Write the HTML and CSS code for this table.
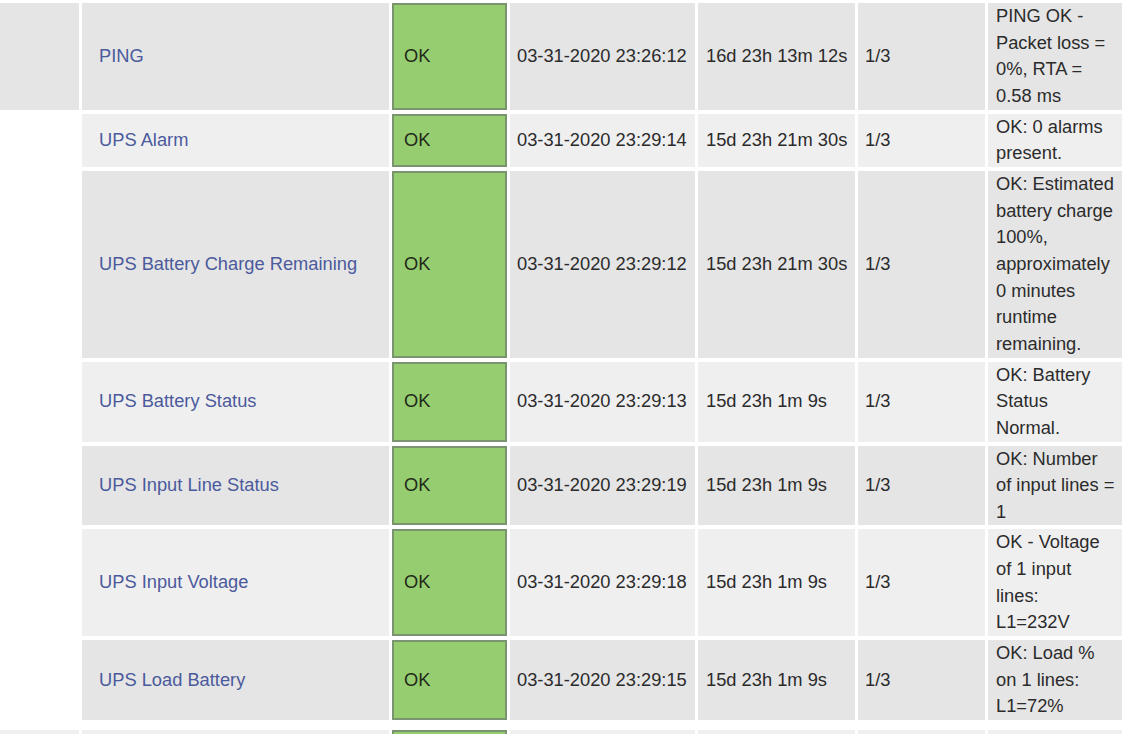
FILE: index.html
```html
<!DOCTYPE html>
<html lang="en">
<head>
    <meta charset="UTF-8">
    <meta name="viewport" content="width=device-width, initial-scale=1.0">
    <title>Service Status Details</title>
    <link rel="stylesheet" href="styles.css">
</head>
<body>
    <table class="status">
        <tr class="odd">
            <td class="host"></td>
            <td class="service"><a href="#">PING</a></td>
            <td class="state ok">OK</td>
            <td class="checked">03-31-2020 23:26:12</td>
            <td class="duration">16d 23h 13m 12s</td>
            <td class="attempt">1/3</td>
            <td class="info">PING OK - Packet loss = 0%, RTA = 0.58 ms</td>
        </tr>
        <tr class="even">
            <td class="host empty"></td>
            <td class="service"><a href="#">UPS Alarm</a></td>
            <td class="state ok">OK</td>
            <td class="checked">03-31-2020 23:29:14</td>
            <td class="duration">15d 23h 21m 30s</td>
            <td class="attempt">1/3</td>
            <td class="info">OK: 0 alarms present.</td>
        </tr>
        <tr class="odd">
            <td class="host empty"></td>
            <td class="service"><a href="#">UPS Battery Charge Remaining</a></td>
            <td class="state ok">OK</td>
            <td class="checked">03-31-2020 23:29:12</td>
            <td class="duration">15d 23h 21m 30s</td>
            <td class="attempt">1/3</td>
            <td class="info">OK: Estimated battery charge 100%, approximately 0 minutes runtime remaining.</td>
        </tr>
        <tr class="even">
            <td class="host empty"></td>
            <td class="service"><a href="#">UPS Battery Status</a></td>
            <td class="state ok">OK</td>
            <td class="checked">03-31-2020 23:29:13</td>
            <td class="duration">15d 23h 1m 9s</td>
            <td class="attempt">1/3</td>
            <td class="info">OK: Battery Status Normal.</td>
        </tr>
        <tr class="odd">
            <td class="host empty"></td>
            <td class="service"><a href="#">UPS Input Line Status</a></td>
            <td class="state ok">OK</td>
            <td class="checked">03-31-2020 23:29:19</td>
            <td class="duration">15d 23h 1m 9s</td>
            <td class="attempt">1/3</td>
            <td class="info">OK: Number of input lines = 1</td>
        </tr>
        <tr class="even">
            <td class="host empty"></td>
            <td class="service"><a href="#">UPS Input Voltage</a></td>
            <td class="state ok">OK</td>
            <td class="checked">03-31-2020 23:29:18</td>
            <td class="duration">15d 23h 1m 9s</td>
            <td class="attempt">1/3</td>
            <td class="info">OK - Voltage of 1 input lines: L1=232V</td>
        </tr>
        <tr class="odd">
            <td class="host empty"></td>
            <td class="service"><a href="#">UPS Load Battery</a></td>
            <td class="state ok">OK</td>
            <td class="checked">03-31-2020 23:29:15</td>
            <td class="duration">15d 23h 1m 9s</td>
            <td class="attempt">1/3</td>
            <td class="info">OK: Load % on 1 lines: L1=72%</td>
        </tr>
        <!-- next host starts here -->
        <tr class="gap"><td colspan="7"></td></tr>
        <tr class="even next">
            <td class="host"></td>
            <td class="service"></td>
            <td class="state ok"></td>
            <td class="checked"></td>
            <td class="duration"></td>
            <td class="attempt"></td>
            <td class="info"></td>
        </tr>
    </table>
</body>
</html>
```

FILE: styles.css
```css
* {
    box-sizing: border-box;
    margin: 0;
    padding: 0;
}

html {
    overflow: hidden;
}

body {
    background: #ffffff;
    font-family: 'Liberation Sans', Arial, sans-serif;
    font-size: 18.3px;
    color: #2b2b2b;
}

.status {
    table-layout: fixed;
    width: 1128px;
    margin: -1px 0 0 -3px;
    border-collapse: separate;
    border-spacing: 3px 4px;
}

.status td {
    line-height: 26.65px;
    vertical-align: middle;
    padding: 0 6px 0 8px;
}

/* row striping */
.odd td {
    background-color: #e5e5e5;
}

.even td {
    background-color: #f0eff0;
}

.status td.empty {
    background-color: transparent;
}

/* column widths */
.host {
    width: 79px;
}

.service {
    width: 307px;
}

.status td.service {
    padding-left: 17px;
}

.service a {
    color: #4b5a9c;
    text-decoration: none;
}

.state {
    width: 115px;
}

.status td.ok {
    background-color: #96cd70;
    border: 2px solid #7a9470;
    padding-left: 10px;
    color: #1f2a1a;
}

.checked {
    width: 185px;
}

.status td.checked {
    padding-left: 7px;
}

.duration {
    width: 157px;
}

.attempt {
    width: 127px;
}

.status td.attempt {
    padding-left: 7px;
}

.info {
    width: 134px;
}

.status td.info {
    padding-right: 6.8px;
}

.gap td {
    height: 2px;
    padding: 0;
    line-height: 0;
    font-size: 0;
    background: transparent;
}

.next td {
    height: 80px;
}
```
